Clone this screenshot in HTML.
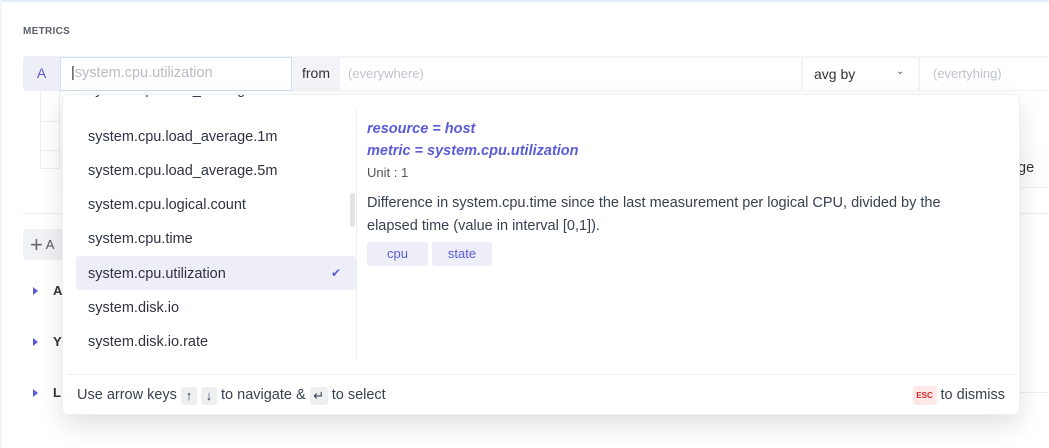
<!DOCTYPE html>
<html><head><style>
*{box-sizing:border-box;margin:0;padding:0}
body{width:1049px;height:448px;background:#fff;font-family:"Liberation Sans",sans-serif;position:relative;overflow:hidden;color:#374151}
.a{position:absolute}
.item{position:absolute;left:88px;font-size:14.5px;color:#2d3340;height:34px;line-height:34px}
.k{display:inline-block;width:16px;height:18px;background:#eeeff1;border-radius:3px;text-align:center;line-height:18px;font-size:13px;vertical-align:-1px}
</style></head><body>
<div class="a" style="left:0;top:0;width:1049px;height:2px;background:#e6eef9"></div>
<div class="a" style="left:0;top:0;width:2px;height:448px;background:#f1f3f7"></div>
<div class="a" style="left:23px;top:26px;font-size:10px;font-weight:bold;color:#5b5f6a;letter-spacing:.3px">METRICS</div>
<div class="a" style="left:23px;top:56px;width:1026px;height:35px;background:#f3f4f7;border-radius:4px 0 0 4px"></div>
<div class="a" style="left:23px;top:56px;width:37px;height:35px;background:#eeeef9;border-radius:4px 0 0 4px;color:#5b5bd6;font-size:14px;line-height:35px;text-align:center">A</div>
<div class="a" style="left:60px;top:57px;width:232px;height:34px;background:#fff;border:1.5px solid #cfe0f5;font-size:14.5px;line-height:31px;padding-left:10px;color:#b8bcc4"><span style="color:#333">|</span>system.cpu.utilization</div>
<div class="a" style="left:292px;top:56px;width:48px;height:35px;line-height:35px;font-size:14px;color:#333;text-align:center">from</div>
<div class="a" style="left:340px;top:58px;width:461px;height:32px;background:#fff;font-size:13px;color:#bfc3cb;line-height:32px;padding-left:8px">(everywhere)</div>
<div class="a" style="left:803px;top:58px;width:115px;height:32px;background:#fff;font-size:14px;color:#333;line-height:32px;padding-left:11px">avg by<span style="position:absolute;left:93px;top:-2px;font-size:10px;color:#555">&#8964;</span></div>
<div class="a" style="left:920px;top:58px;width:129px;height:32px;background:#fff;font-size:13px;color:#bfc3cb;line-height:32px;padding-left:13px">(evertyhing)</div>
<div class="a" style="left:40px;top:91px;width:20px;height:78px;border:1px solid #eceef1;border-top:none"></div>
<div class="a" style="left:40px;top:121px;width:20px;height:1px;background:#eceef1"></div>
<div class="a" style="left:40px;top:150px;width:1009px;height:1px;background:#eceef1"></div>
<div class="a" style="left:60px;top:150px;width:989px;height:38px;border-bottom:1px solid #eceef1;background:#fdfdfd"></div>
<div class="a" style="left:1018px;top:160px;font-size:14.5px;color:#333">ge</div>
<div class="a" style="left:23px;top:213px;width:1026px;height:1px;background:#eceef1"></div>
<div class="a" style="left:23px;top:229px;width:45px;height:31px;background:#f1f2f5;border-radius:4px;font-size:13px;line-height:31px;padding-left:7px;color:#555"><span style="font-size:22px;font-weight:300;color:#666;vertical-align:-3px">+</span> A</div>
<div class="a" style="left:33px;top:287px;width:0;height:0;border-left:5px solid #5b5bd6;border-top:4px solid transparent;border-bottom:4px solid transparent"></div>
<div class="a" style="left:53px;top:283px;font-size:13px;font-weight:bold;color:#333">A</div>
<div class="a" style="left:33px;top:338px;width:0;height:0;border-left:5px solid #5b5bd6;border-top:4px solid transparent;border-bottom:4px solid transparent"></div>
<div class="a" style="left:53px;top:334px;font-size:13px;font-weight:bold;color:#333">Y</div>
<div class="a" style="left:33px;top:389px;width:0;height:0;border-left:5px solid #5b5bd6;border-top:4px solid transparent;border-bottom:4px solid transparent"></div>
<div class="a" style="left:53px;top:385px;font-size:13px;font-weight:bold;color:#333">L</div>
<div class="a" style="left:1020px;top:392px;width:29px;height:1px;background:#eceef1"></div>
<div class="a" style="left:62px;top:94px;width:958px;height:321px;background:#fff;border:1px solid #eef0f3;border-radius:6px;box-shadow:0 10px 25px rgba(0,0,0,.12);overflow:hidden">
  <div class="a" style="left:0;top:0;width:293px;height:265px;overflow:hidden">
    <div class="item" style="left:25px;top:-22px">system.cpu.load_average.15m</div>
    <div class="item" style="left:25px;top:25px">system.cpu.load_average.1m</div>
    <div class="item" style="left:25px;top:59px">system.cpu.load_average.5m</div>
    <div class="item" style="left:25px;top:93px">system.cpu.logical.count</div>
    <div class="item" style="left:25px;top:127px">system.cpu.time</div>
    <div class="a" style="left:13px;top:161px;width:280px;height:34px;background:#eeeef9;border-radius:4px"></div>
    <div class="item" style="left:25px;top:162px">system.cpu.utilization</div>
    <div class="a" style="left:268px;top:161px;line-height:34px;font-size:12px;color:#5b5bd6">&#10004;</div>
    <div class="item" style="left:25px;top:196px">system.disk.io</div>
    <div class="item" style="left:25px;top:230px">system.disk.io.rate</div>
    <div class="a" style="left:287px;top:98px;width:5px;height:34px;background:#e2e3e6;border-radius:3px"></div>
  </div>
  <div class="a" style="left:293px;top:14px;width:1px;height:250px;background:#eceef1"></div>
  <div class="a" style="left:304px;top:26px;font-size:14.5px;font-weight:bold;font-style:italic;color:#5b5bd6">resource = host</div>
  <div class="a" style="left:304px;top:48px;font-size:14.5px;font-weight:bold;font-style:italic;color:#5b5bd6">metric = system.cpu.utilization</div>
  <div class="a" style="left:304px;top:70px;font-size:13px;color:#555">Unit : 1</div>
  <div class="a" style="left:304px;top:97px;width:600px;font-size:14.5px;line-height:23px;color:#374151">Difference in system.cpu.time since the last measurement per logical CPU, divided by the elapsed time (value in interval [0,1]).</div>
  <div class="a" style="left:304px;top:147px;width:61px;height:24px;background:#eeeef9;border-radius:3px;font-size:13px;line-height:24px;text-align:center;color:#5b5bd6">cpu</div>
  <div class="a" style="left:369px;top:147px;width:60px;height:24px;background:#eeeef9;border-radius:3px;font-size:13px;line-height:24px;text-align:center;color:#5b5bd6">state</div>
  <div class="a" style="left:4px;top:279px;width:950px;height:1px;background:#eceef1"></div>
  <div class="a" style="left:14px;top:289px;font-size:14.5px;line-height:22px;color:#374151">Use arrow keys <span class="k">&#8593;</span> <span class="k">&#8595;</span> to navigate &amp; <span class="k" style="width:18px">&#8629;</span> to select</div>
  <div class="a" style="right:14px;top:289px;font-size:14.5px;line-height:22px;color:#374151"><span style="display:inline-block;width:24px;height:19px;background:#fde8e8;border-radius:3px;text-align:center;line-height:19px;font-size:8px;font-weight:bold;color:#dc2626;vertical-align:1px">ESC</span> to dismiss</div>
</div>
</body></html>
